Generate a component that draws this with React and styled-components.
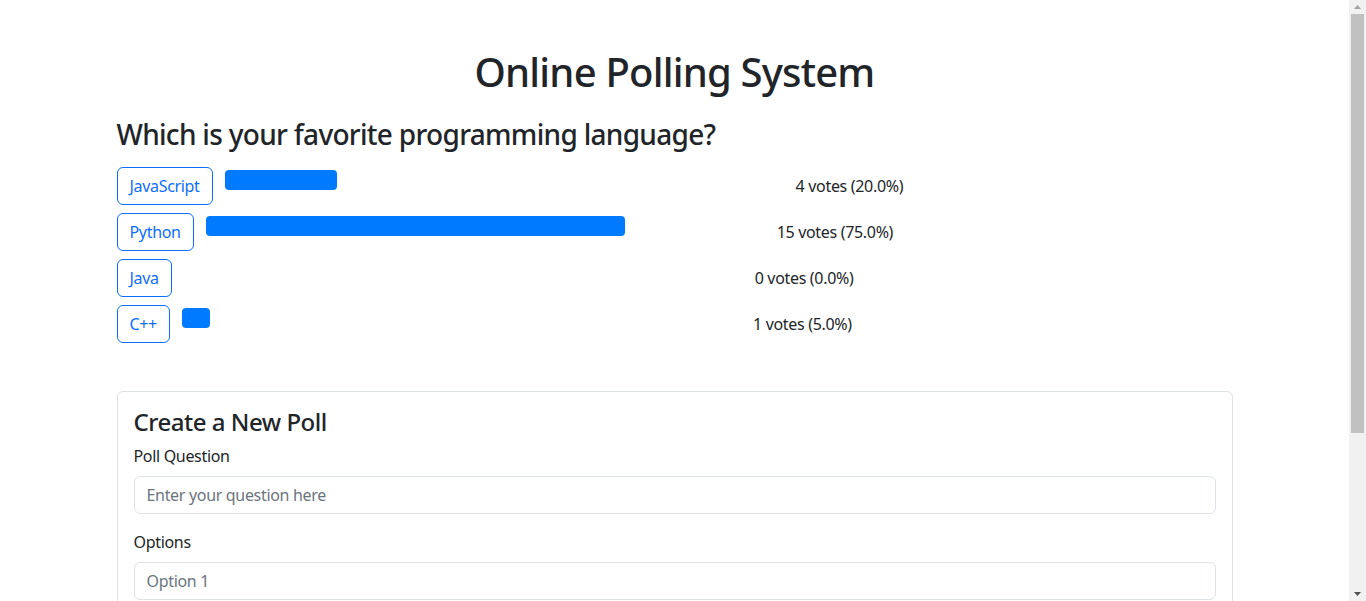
import React, { useState } from "react";
import styled, { createGlobalStyle } from "styled-components";

const GlobalStyle = createGlobalStyle`
  html, body {
    margin: 0;
    padding: 0;
    background: #fff;
  }
  body {
    font-family: "Noto Sans", "Open Sans", sans-serif;
    font-size: 16px;
    line-height: 1.5;
    color: #212529;
  }
  *, *::before, *::after {
    box-sizing: border-box;
  }
`;

// room for the window scrollbar on the right
const Page = styled.div`
  margin-right: 17px;
`;

const ScrollRail = styled.div`
  position: fixed;
  top: 0;
  right: 0;
  bottom: 0;
  width: 17px;
  background: #f1f1f1;
  display: flex;
  flex-direction: column;
  align-items: center;
`;

const ArrowSlot = styled.div`
  height: 14px;
  display: flex;
  align-items: center;
  justify-content: center;
  flex-shrink: 0;
  svg {
    display: block;
  }
`;

const Thumb = styled.div`
  width: 13px;
  height: 419px;
  background: #c1c1c1;
  flex-shrink: 0;
`;

const RailSpace = styled.div`
  flex: 1;
`;

const Container = styled.div`
  max-width: 1140px;
  margin: 0 auto;
  padding: 0 12px 94px;
`;

const PageTitle = styled.h1`
  margin: 48px 0 22px;
  font-size: 40px;
  font-weight: 500;
  line-height: 1.2;
  text-align: center;
  letter-spacing: -0.02em;
`;

const Question = styled.h3`
  margin: 0 0 15px;
  font-size: 28px;
  font-weight: 500;
  line-height: 1.2;
  letter-spacing: -0.025em;
`;

const OptionRow = styled.div`
  display: flex;
  align-items: center;
  margin-bottom: 8px;
`;

const OutlineButton = styled.button`
  font-family: inherit;
  font-size: 16px;
  line-height: 24px;
  padding: 6px 12px;
  color: #0d6efd;
  background: #fff;
  border: 1px solid #0d6efd;
  border-radius: 6px;
  cursor: pointer;
  letter-spacing: -0.02em;
  flex-shrink: 0;
`;

const BarTrack = styled.div`
  width: 50%;
  height: 20px;
  margin: 0 12.5px 12px;
  flex-shrink: 0;
`;

const BarFill = styled.div`
  height: 100%;
  background: #007bff;
  border-radius: 4px;
`;

const Votes = styled.span`
  white-space: nowrap;
  letter-spacing: -0.02em;
`;

const Card = styled.div`
  margin-top: 48px;
  border: 1px solid #dee2e6;
  border-radius: 6px;
  padding: 16px;
`;

const CardTitle = styled.h4`
  margin: 0 0 8px;
  font-size: 24px;
  font-weight: 500;
  line-height: 1.2;
  letter-spacing: -0.02em;
`;

const Field = styled.div`
  margin-bottom: 16px;
`;

const Label = styled.label`
  display: inline-block;
  margin-bottom: 8px;
  letter-spacing: -0.02em;
`;

const Input = styled.input`
  display: block;
  width: 100%;
  font-family: inherit;
  font-size: 16px;
  line-height: 24px;
  padding: 6px 12px;
  color: #212529;
  border: 1px solid #dee2e6;
  border-radius: 6px;
  margin-bottom: ${(p) => (p.$tight ? "8px" : "0")};
  letter-spacing: -0.02em;
  &::placeholder {
    color: #6c757d;
  }
`;

const Actions = styled.div`
  display: flex;
  gap: 8px;
`;

const SolidButton = styled(OutlineButton)`
  color: ${(p) => (p.$primary ? "#fff" : "#6c757d")};
  background: ${(p) => (p.$primary ? "#0d6efd" : "#fff")};
  border-color: ${(p) => (p.$primary ? "#0d6efd" : "#6c757d")};
`;

const initialOptions = [
  { name: "JavaScript", votes: 4 },
  { name: "Python", votes: 15 },
  { name: "Java", votes: 0 },
  { name: "C++", votes: 1 },
];

export default function App() {
  const [options, setOptions] = useState(initialOptions);
  const total = options.reduce((s, o) => s + o.votes, 0);

  const vote = (idx) => {
    setOptions(options.map((o, i) => (i === idx ? { ...o, votes: o.votes + 1 } : o)));
  };

  return (
    <>
      <GlobalStyle />
      <Page>
        <Container>
          <PageTitle>Online Polling System</PageTitle>
          <Question>Which is your favorite programming language?</Question>
          {options.map((opt, idx) => {
            const pct = total ? (opt.votes / total) * 100 : 0;
            return (
              <OptionRow key={opt.name}>
                <OutlineButton onClick={() => vote(idx)}>{opt.name}</OutlineButton>
                <BarTrack>
                  <BarFill style={{ width: `${pct}%` }} />
                </BarTrack>
                <Votes>
                  {opt.votes} votes ({pct.toFixed(1)}%)
                </Votes>
              </OptionRow>
            );
          })}

          <Card>
            <CardTitle>Create a New Poll</CardTitle>
            <Field>
              <Label>Poll Question</Label>
              <Input placeholder="Enter your question here" />
            </Field>
            <Field>
              <Label>Options</Label>
              <Input $tight placeholder="Option 1" />
              <Input $tight placeholder="Option 2" />
            </Field>
            <Actions>
              <SolidButton>Add Option</SolidButton>
              <SolidButton $primary>Create Poll</SolidButton>
            </Actions>
          </Card>
        </Container>
      </Page>

      <ScrollRail>
        <ArrowSlot>
          <svg width="7" height="4" viewBox="0 0 7 4">
            <polygon points="0,4 3.5,0 7,4" fill="#a3a3a3" />
          </svg>
        </ArrowSlot>
        <Thumb />
        <RailSpace />
        <ArrowSlot>
          <svg width="7" height="4" viewBox="0 0 7 4">
            <polygon points="0,0 7,0 3.5,4" fill="#505050" />
          </svg>
        </ArrowSlot>
      </ScrollRail>
    </>
  );
}
